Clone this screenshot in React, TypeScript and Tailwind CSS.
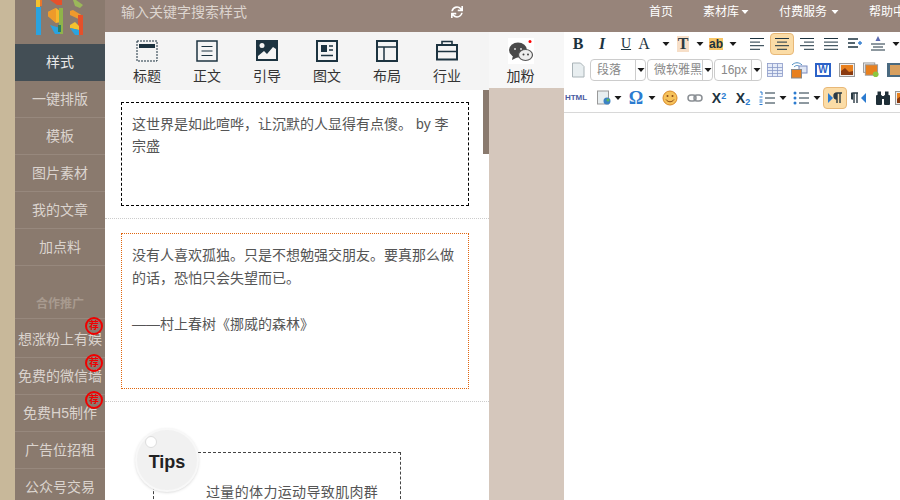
import { FaSync } from 'react-icons/fa';

const ink = '#1c3340';

const mainNav = ['一键排版', '模板', '图片素材', '我的文章', '加点料'];
const promoNav = [
  { label: '想涨粉上有娱', hot: true },
  { label: '免费的微信墙', hot: true },
  { label: '免费H5制作', hot: true },
  { label: '广告位招租', hot: false },
  { label: '公众号交易', hot: false },
];

const Logo = () => (
  <svg viewBox="0 0 90 44" className="w-full h-full">
    {/* left bar */}
    <rect x="21" y="7" width="5" height="28" fill="#2aa3e0" />
    <rect x="21" y="0" width="4" height="7" fill="#f4c12e" />
    <rect x="25" y="0" width="2" height="6" fill="#e8762c" />
    {/* middle block */}
    <polygon points="35,0 47,0 47,5 42,5" fill="#e5502a" />
    <polygon points="33,12 41,8 46,12 46,22 41,23 33,16" fill="#f6b62c" />
    <polygon points="33,12 41,8 41,23 33,16" fill="#ee9a2a" />
    <rect x="44" y="8" width="4" height="26" fill="#8fb34a" />
    <polygon points="35,25 45,28 45,34 40,34" fill="#2aa3e0" />
    <rect x="43" y="25" width="3" height="7" fill="#2f7d5e" />
    {/* right block */}
    <polygon points="58,0 61,0 68,5 65,8 60,6" fill="#9bb85a" />
    <polygon points="55,11 58,10 68,16 68,21 55,15" fill="#ef9a2c" />
    <rect x="63" y="15" width="5" height="20" fill="#e5502a" />
    <polygon points="55,25 60,22 64,26 64,30 55,28" fill="#f4c12e" />
    <polygon points="55,28 64,30 64,35 60,35" fill="#2aa3e0" />
  </svg>
);

const SideItem = ({ label, active, hot, tall }: { label: string; active?: boolean; hot?: boolean; tall?: boolean }) => (
  <div className={`relative pb-2 text-sm leading-5 text-center whitespace-nowrap border-b ${tall ? 'pt-2.5' : 'pt-2'} ${active ? 'bg-[#434e55] text-[#e8e8e8] border-[#434e55]' : 'text-[#dbd4ce] border-[#97887d]'}`}>
    {label}
    {hot && (
      <span className={`absolute right-0.5 flex items-center justify-center w-4.5 h-4.5 rounded-full border-2 border-[#f00000] text-[10px] leading-none font-bold text-[#f00000] ${tall ? '-top-0.5' : '-top-1'}`}>
        荐
      </span>
    )}
  </div>
);

const TabIcon = ({ name }: { name: string }) => (
  <svg viewBox="0 0 22 22" className="w-5.5 h-5.5" fill="none" stroke={ink} strokeWidth="2">
    {name === 'title' && (
      <>
        <rect x="1" y="1" width="20" height="20" strokeWidth="1" strokeDasharray="2 1" />
        <rect x="3" y="4" width="16" height="4" fill={ink} stroke="none" />
      </>
    )}
    {name === 'text' && (
      <>
        <rect x="1" y="1" width="20" height="20" strokeWidth="1.5" />
        <path d="M5.5 6.5h11M5.5 11h11M5.5 15.5h11" strokeWidth="1.2" />
      </>
    )}
    {name === 'quote' && (
      <>
        <rect x="0" y="0" width="22" height="21" fill={ink} stroke="none" />
        <circle cx="6" cy="5.5" r="2.5" fill="#f4f4f4" stroke="none" />
        <polygon points="2,19 2,16 8,11 11,14 17,7 20,9 20,19" fill="#f4f4f4" stroke="none" />
      </>
    )}
    {name === 'mixed' && (
      <>
        <rect x="1" y="1" width="20" height="20" />
        <rect x="5" y="5" width="6" height="7" fill={ink} stroke="none" />
        <path d="M13 6h4M13 10h4M5 15.5h12" strokeWidth="1.5" />
      </>
    )}
    {name === 'layout' && (
      <>
        <rect x="1" y="1" width="20" height="20" />
        <path d="M1 7h20M8 7v14" strokeWidth="1.5" />
      </>
    )}
    {name === 'trade' && (
      <>
        <rect x="1" y="5" width="20" height="14.5" />
        <path d="M6 5V1.5h10V5M1 11.5h20" strokeWidth="1.6" />
      </>
    )}
  </svg>
);

const Tab = ({ name, label }: { name: string; label: string }) => (
  <div className="flex flex-col items-center w-15">
    <TabIcon name={name} />
    <span className="mt-1 text-sm leading-5 text-[#333]">{label}</span>
  </div>
);

const Caret = ({ className = 'w-3' }: { className?: string }) => (
  <span className={`flex justify-center shrink-0 ${className}`}>
    <svg viewBox="0 0 7 4" className="w-2 h-1" fill="#1a1a1a">
      <polygon points="0,0 7,0 3.5,4" />
    </svg>
  </span>
);

const Btn = ({ children, className = 'w-6', active }: { children?: React.ReactNode; className?: string; active?: boolean }) => (
  <span className={`flex items-center justify-center h-5.5 shrink-0 rounded-sm ${className} ${active ? 'bg-[#fbdca6] border border-[#e8b878]' : ''}`}>
    {children}
  </span>
);

const Lines = ({ rows }: { rows: number[][] }) => (
  <svg viewBox="0 0 16 14" className="w-4 h-3.5" stroke={ink} strokeWidth="1">
    {rows.map(([a, b], i) => (
      <line key={i} x1={a} x2={b} y1={1.5 + i * 3.6} y2={1.5 + i * 3.6} />
    ))}
  </svg>
);

const Select = ({ label, className }: { label: string; className: string }) => (
  <span className={`flex h-5.5 shrink-0 rounded-sm border border-[#ccc] text-xs text-[#888] ${className}`}>
    <span className="flex-1 flex items-center pl-1.5 whitespace-nowrap">{label}</span>
    <span className="flex items-center w-2.5 border-l border-[#ccc]">
      <Caret className="w-2.5" />
    </span>
  </span>
);

const Pic = ({ className = '' }: { className?: string }) => (
  <svg viewBox="0 0 16 14" className={`w-4 h-3.5 ${className}`}>
    <rect x="0.5" y="0.5" width="15" height="13" fill="#eee" stroke="#999" />
    <rect x="2" y="2" width="12" height="10" fill="#e8801e" />
    <polygon points="2,12 2,8 6,5 10,9 14,8 14,12" fill="#8a3a10" />
  </svg>
);

const EditorToolbar = () => (
  <div className="flex flex-col pb-0.5 border-b border-[#d8d8d8] overflow-hidden">
    <div className="flex items-center h-6 pl-0.5 font-['Liberation_Serif',serif] text-[#1c3340]">
      <Btn><b className="text-base">B</b></Btn>
      <Btn><i className="text-base font-bold">I</i></Btn>
      <Btn><u className="text-sm">U</u></Btn>
      <Btn className="w-5 -ml-1"><span className="text-base">A</span></Btn>
      <Caret className="w-5 ml-0.5" />
      <Btn className="w-4 -ml-px">
        <span className="px-px bg-[#f7dfc8] text-base leading-4 font-bold text-[#2c3a40]">T</span>
      </Btn>
      <Caret className="w-4 ml-px" />
      <Btn className="w-4">
        <span className="bg-[#f6c667] text-xs leading-3 font-bold font-['Liberation_Sans',sans-serif]">ab</span>
      </Btn>
      <Caret className="w-4 ml-px" />
      <span className="ml-0.5 h-5 w-px bg-[#ccc]" />
      <Btn className="w-6 ml-0.5"><Lines rows={[[1, 15], [1, 11], [1, 15], [1, 11]]} /></Btn>
      <Btn className="w-6 ml-px" active><Lines rows={[[1, 15], [3, 13], [1, 15], [3, 13]]} /></Btn>
      <Btn className="w-6 ml-px"><Lines rows={[[1, 15], [5, 15], [1, 15], [5, 15]]} /></Btn>
      <Btn><Lines rows={[[1, 15], [1, 15], [1, 15], [1, 15]]} /></Btn>
      <Btn>
        <svg viewBox="0 0 16 14" className="w-4 h-3.5" stroke={ink} strokeWidth="1.4">
          <path d="M1 2h10M1 6h7M1 10h10" />
          <path d="M11 6h4M13 4v4" stroke="#3b82d0" />
        </svg>
      </Btn>
      <Btn className="w-6 -ml-px">
        <svg viewBox="0 0 16 18" className="w-4 h-4.5" stroke={ink} strokeWidth="1">
          <path d="M8 1l-2.5 5h5z" fill="#5a6ab0" stroke="none" />
          <path d="M1 9h14M3 12h10M1 15h14" />
        </svg>
      </Btn>
      <Caret />
    </div>
    <div className="flex items-center h-6 mt-0.5 pl-1.5">
      <svg viewBox="0 0 14 16" className="w-4 h-4 mr-1 shrink-0">
        <path d="M1.5 1h8l3.5 3.5V15h-11.5z" fill="#e8eef0" stroke="#aab4b8" />
      </svg>
      <Select label="段落" className="w-14" />
      <Select label="微软雅黑" className="w-16.5 ml-px" />
      <Select label="16px" className="w-12 ml-px" />
      <div className="flex items-center ml-px">
        <Btn>
          <svg viewBox="0 0 16 14" className="w-4 h-3.5" fill="#e6ecf8" stroke="#8a9ac8" strokeWidth="0.8">
            <rect x="0.5" y="0.5" width="15" height="13" />
            <path d="M0.5 4.5h15M0.5 7.5h15M0.5 10.5h15M5.5 0.5v13M10.5 0.5v13" fill="none" />
          </svg>
        </Btn>
        <Btn>
          <svg viewBox="0 0 18 18" className="w-4.5 h-4.5">
            <path d="M2 4c3-3 7-3 10 0M4 6c2-2 4-2 6 0" fill="none" stroke="#4a8ac0" strokeWidth="1" />
            <rect x="9" y="5" width="8" height="7" fill="#dfe6f4" stroke="#7b8cc0" />
            <rect x="1.5" y="8.5" width="10" height="8.5" fill="#e8801e" stroke="#888" />
          </svg>
        </Btn>
        <Btn>
          <span className="flex items-center justify-center w-4 h-3.5 border-2 border-[#2b62c8] text-[10px] leading-none font-bold text-[#2b62c8]">W</span>
        </Btn>
        <Btn><Pic /></Btn>
        <Btn>
          <svg viewBox="0 0 18 17" className="w-4.5 h-4">
            <rect x="1" y="1" width="12" height="10" fill="#eee" stroke="#999" />
            <rect x="3" y="3" width="13" height="11" fill="#e8801e" stroke="#999" />
            <circle cx="14" cy="13" r="3" fill="#8cc63f" />
          </svg>
        </Btn>
        <Btn>
          <svg viewBox="0 0 16 14" className="w-4 h-3.5">
            <rect width="16" height="14" fill="#4a6a80" />
            <rect x="3" y="2" width="10" height="10" fill="#d8a060" />
          </svg>
        </Btn>
      </div>
    </div>
    <div className="flex items-center h-6 mt-1 text-[#1c3340]">
      <Btn><span className="text-[8px] font-bold text-[#4a5aa0] font-['Liberation_Sans',sans-serif]">HTML</span></Btn>
      <Btn className="w-4 ml-2">
        <svg viewBox="0 0 14 16" className="w-3.5 h-4">
          <rect x="0.5" y="1" width="11" height="13" fill="#e8eef0" stroke="#999" />
          <circle cx="10" cy="11" r="3.5" fill="#3b82c4" />
          <circle cx="11" cy="10" r="1.5" fill="#5cb85c" />
        </svg>
      </Btn>
      <Caret />
      <Btn className="w-4 ml-1">
        <span className="text-lg font-bold text-[#2b7bd0] font-['Liberation_Serif',serif]">Ω</span>
      </Btn>
      <Caret className="w-3 ml-0.5" />
      <Btn>
        <svg viewBox="0 0 16 16" className="w-4 h-4">
          <circle cx="8" cy="8" r="7" fill="#f6c25a" stroke="#d98a2a" />
          <circle cx="5.5" cy="6" r="1" fill="#8a4a1a" />
          <circle cx="10.5" cy="6" r="1" fill="#8a4a1a" />
          <path d="M4 9.5c2 3 6 3 8 0" fill="none" stroke="#8a4a1a" />
        </svg>
      </Btn>
      <Btn className="w-6 ml-px">
        <svg viewBox="0 0 16 8" className="w-4 h-2" fill="none" stroke="#8a8f94" strokeWidth="1.5">
          <rect x="1" y="1" width="8" height="6" rx="3" />
          <rect x="7" y="1" width="8" height="6" rx="3" />
        </svg>
      </Btn>
      <Btn>
        <span className="text-sm font-bold font-['Liberation_Sans',sans-serif]">X<sup className="text-[9px] text-[#2b7bd0]">2</sup></span>
      </Btn>
      <Btn>
        <span className="text-sm font-bold font-['Liberation_Sans',sans-serif]">X<sub className="text-[9px] text-[#2b7bd0]">2</sub></span>
      </Btn>
      <Btn>
        <svg viewBox="0 0 16 14" className="w-4 h-3.5">
          <path d="M6 2h10M6 7h10M6 12h10" stroke={ink} />
          <path d="M1 1h2v3M0.5 6h3M0.5 9h3M0.5 11h3M0.5 13.5h3" stroke="#2b7bd0" fill="none" />
        </svg>
      </Btn>
      <Caret className="w-3 -ml-0.5" />
      <Btn>
        <svg viewBox="0 0 16 14" className="w-4 h-3.5">
          <path d="M6 2h10M6 7h10M6 12h10" stroke={ink} />
          <circle cx="2" cy="2" r="1.5" fill="#2b7bd0" />
          <circle cx="2" cy="7" r="1.5" fill="#2b7bd0" />
          <circle cx="2" cy="12" r="1.5" fill="#2b7bd0" />
        </svg>
      </Btn>
      <Caret className="w-3 -ml-0.5" />
      <Btn active>
        <svg viewBox="0 0 16 12" className="w-4 h-3">
          <polygon points="1,1 6,6 1,11" fill="#2b7bd0" />
          <path d="M10 1h5M10 1a3 3 0 0 0 0 6M10 1v10M13 1v10" stroke="#2a3a44" strokeWidth="1.4" fill="#2a3a44" />
        </svg>
      </Btn>
      <Btn>
        <svg viewBox="0 0 16 12" className="w-4 h-3">
          <polygon points="15,1 10,6 15,11" fill="#2b7bd0" />
          <path d="M2 1h5M2 1a3 3 0 0 0 0 6M3 1v10M6 1v10" stroke="#2a3a44" strokeWidth="1.4" fill="#2a3a44" />
        </svg>
      </Btn>
      <Btn>
        <svg viewBox="0 0 16 14" className="w-4 h-3.5" fill="#1f2f38">
          <rect x="1" y="4" width="6" height="10" rx="1" />
          <rect x="9" y="4" width="6" height="10" rx="1" />
          <rect x="2.5" y="0.5" width="3.5" height="4" />
          <rect x="10" y="0.5" width="3.5" height="4" />
          <rect x="6" y="5" width="4" height="3" />
        </svg>
      </Btn>
      <Btn className="w-4">
        <Pic />
      </Btn>
    </div>
  </div>
);

export default function App() {
  return (
    <div className="flex w-[900px] h-[500px] overflow-hidden bg-white font-['Liberation_Sans','Noto_Sans_CJK_SC',sans-serif]">
      <div className="w-[15px] shrink-0 bg-[#c8b89a]" />

      {/* Side menu */}
      <nav className="w-[90px] shrink-0 bg-[#8a7a6e]">
        <div className="h-11 overflow-hidden">
          <Logo />
        </div>
        <SideItem label="样式" active />
        {mainNav.map((label) => (
          <SideItem key={label} label={label} />
        ))}
        <div className="pt-7 pb-1 text-xs leading-5 font-bold text-center text-[#a89a8f] border-b border-[#97887d]">
          合作推广
        </div>
        {promoNav.map((item, i) => (
          <SideItem key={item.label} label={item.label} hot={item.hot} tall={i === 0} />
        ))}
      </nav>

      <div className="flex-1 flex flex-col min-w-0">
        {/* Top bar */}
        <header className="flex items-center h-8 shrink-0 pl-4 pb-2 bg-[#97847a] text-white whitespace-nowrap overflow-hidden">
          <span className="w-82 shrink-0 text-sm text-[#ddd5cf]">输入关键字搜索样式</span>
          <span className="flex justify-center w-4 shrink-0">
            <FaSync className="w-3 h-3" />
          </span>
          <div className="flex items-center shrink-0 gap-7.5 ml-46 text-xs">
            <span>首页</span>
            <span className="flex items-center gap-0.5">
              素材库
              <svg viewBox="0 0 7 4" className="w-2 h-1" fill="white"><polygon points="0,0 7,0 3.5,4" /></svg>
            </span>
            <span className="flex items-center gap-1">
              付费服务
              <svg viewBox="0 0 7 4" className="w-2 h-1" fill="white"><polygon points="0,0 7,0 3.5,4" /></svg>
            </span>
            <span>帮助中心</span>
          </div>
        </header>

        <div className="flex flex-1 min-h-0">
          {/* Style list */}
          <section className="relative w-96 shrink-0 flex flex-col overflow-hidden">
            <div className="flex h-14.5 shrink-0 pt-2 pl-3 bg-[#f4f4f4]">
              <Tab name="title" label="标题" />
              <Tab name="text" label="正文" />
              <Tab name="quote" label="引导" />
              <Tab name="mixed" label="图文" />
              <Tab name="layout" label="布局" />
              <Tab name="trade" label="行业" />
            </div>
            <div className="absolute right-0 top-14.5 w-1.5 h-16 bg-[#8a7a6e]" />

            <div className="pl-4 pr-5 pt-3 pb-3 border-b border-dotted border-[#ccc]">
              <div className="h-26 px-2.5 pt-2.5 border border-dashed border-black text-sm leading-[22px] text-[#555]">
                这世界是如此喧哗，让沉默的人显得有点傻。 by 李宗盛
              </div>
            </div>
            <div className="pl-4 pr-5 pt-3.5 pb-3 border-b border-dotted border-[#ccc]">
              <div className="h-39 px-2.5 pt-2.5 border border-dotted border-[#e0660f] text-sm leading-[23px] text-[#555]">
                <p>没有人喜欢孤独。只是不想勉强交朋友。要真那么做的话，恐怕只会失望而已。</p>
                <p className="mt-[23px]">——村上春树《挪威的森林》</p>
              </div>
            </div>
            <div className="relative pt-12.5 pl-12">
              <div className="absolute top-6.5 left-7.5 flex items-center justify-center w-16 h-16 pt-1 rounded-full bg-[#f1f1f1] border-2 border-[#f8f8f8] shadow text-lg font-bold text-[#222]">
                <span className="absolute top-1.5 left-2 w-3 h-3 rounded-full bg-white border border-[#ddd]" />
                Tips
              </div>
              <div className="w-62 h-24 pl-13 pt-7 border border-dashed border-[#444] text-sm leading-[22px] tracking-wide text-[#555]">
                过量的体力运动导致肌肉群
              </div>
            </div>
          </section>

          {/* Fans promo */}
          <aside className="w-[75px] shrink-0 bg-[#d5c7bc]">
            <div className="flex flex-col items-center h-14 pt-1.5 pr-3 bg-[#f7f7f7]">
              <svg viewBox="0 0 26 26" className="w-6.5 h-6.5">
                <rect width="26" height="26" fill="white" />
                <ellipse cx="10" cy="12" rx="9" ry="7.5" fill="#4a4a4a" />
                <polygon points="5,17 4,22 10,19" fill="#4a4a4a" />
                <ellipse cx="17.5" cy="17" rx="7" ry="5.5" fill="#eee" stroke="#555" strokeWidth="1.2" />
                <circle cx="7" cy="11" r="1" fill="#ddd" />
                <circle cx="13" cy="11" r="1" fill="#ddd" />
                <circle cx="15.5" cy="16.5" r="1" fill="#444" />
                <circle cx="20" cy="16.5" r="1" fill="#444" />
                <circle cx="22" cy="3.5" r="1.5" fill="#f00" />
              </svg>
              <span className="mt-0.5 text-sm leading-5 text-[#333]">加粉</span>
            </div>
          </aside>

          {/* Editor */}
          <div className="flex-1 min-w-0 bg-white">
            <EditorToolbar />
          </div>
        </div>
      </div>
    </div>
  );
}
